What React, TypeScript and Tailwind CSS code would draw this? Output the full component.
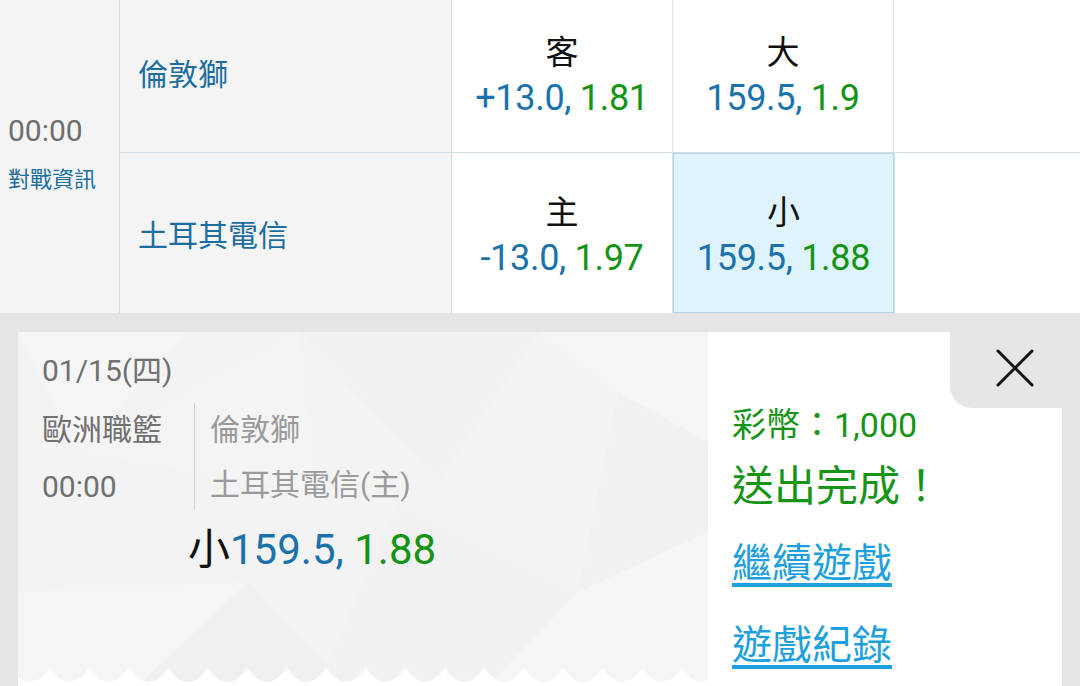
import React from "react";

const Odds = ({ label, a, b }: { label: string; a: string; b: string }) => (
  <div className="flex flex-col items-center">
    <div className="text-[33px] leading-[40px] text-[#111]">{label}</div>
    <div className="text-[36px] leading-[42px] tracking-[-0.3px] mt-[4px]">
      <span className="text-[#1a72ad]">{a}, </span>
      <span className="text-[#149414]">{b}</span>
    </div>
  </div>
);

export default function App() {
  return (
    <div className="w-[1080px] h-[686px] overflow-hidden bg-[#e5e5e5] font-['Roboto','Noto_Sans_CJK_TC',sans-serif]">
      {/* top table */}
      <div className="flex h-[313px] bg-white">
        <div className="w-[120px] shrink-0 bg-[#f4f4f4] border-r border-[#d9d9d9] flex flex-col justify-center pl-[8px] pb-[6px]">
          <div className="text-[30px] leading-[34px] text-[#6e6e6e]">00:00</div>
          <div className="text-[22px] leading-[28px] text-[#1c6ea0] mt-[18px]">對戰資訊</div>
        </div>
        <div className="flex-1 flex flex-col">
          <div className="h-[153px] flex border-b border-[#d3dde6]">
            <div className="w-[332px] bg-[#f4f4f4] border-r border-[#dcdcdc] flex items-center pl-[18px] pb-[4px]">
              <span className="text-[30px] text-[#1c6ea0]">倫敦獅</span>
            </div>
            <div className="w-[221px] border-r border-[#d8e2ea] flex items-center justify-center">
              <Odds label="客" a="+13.0" b="1.81" />
            </div>
            <div className="w-[221px] border-r border-[#d8e2ea] flex items-center justify-center">
              <Odds label="大" a="159.5" b="1.9" />
            </div>
            <div className="flex-1" />
          </div>
          <div className="h-[160px] flex">
            <div className="w-[332px] bg-[#f4f4f4] border-r border-[#dcdcdc] flex items-center pl-[18px] pt-[4px]">
              <span className="text-[30px] text-[#1c6ea0]">土耳其電信</span>
            </div>
            <div className="w-[221px] border-r border-[#d8e2ea] flex items-center justify-center pt-[6px]">
              <Odds label="主" a="-13.0" b="1.97" />
            </div>
            <div className="w-[221px] bg-[#def3fc] border border-[#b8d5e6] flex items-center justify-center pt-[6px]">
              <Odds label="小" a="159.5" b="1.88" />
            </div>
            <div className="flex-1 border-l border-[#d8e2ea]" />
          </div>
        </div>
      </div>

      {/* result card */}
      <div className="pt-[19px] px-[18px]">
        <div className="flex h-[354px]">
          <div className="relative w-[690px] shrink-0 bg-[#f3f3f3] overflow-hidden">
            <svg className="absolute inset-0" width="690" height="354" viewBox="0 0 690 354">
              <polygon points="0,0 170,0 60,120" fill="#f5f5f5" />
              <polygon points="280,0 520,0 420,150" fill="#f1f1f1" />
              <polygon points="520,0 690,0 690,110 600,60" fill="#f5f5f5" />
              <polygon points="0,260 230,250 120,354 0,354" fill="#f5f5f5" />
              <polygon points="230,250 330,354 120,354" fill="#f0f0f0" />
              <polygon points="380,170 560,260 470,354 300,354" fill="#f1f1f1" />
              <polygon points="560,260 690,200 690,354 470,354" fill="#f5f5f5" />
              <polygon points="60,120 280,0 300,160" fill="#f4f4f4" />
              <polygon points="600,60 690,110 690,200 560,260" fill="#f1f1f1" />
            </svg>
            <div className="relative pl-[24px] pt-[21px]">
              <div className="text-[30px] leading-[36px] text-[#707070]">01/15(四)</div>
              <div className="flex mt-[14px] h-[107px]">
                <div className="w-[152px] flex flex-col pt-[9px] gap-[21px]">
                  <div className="text-[30px] leading-[36px] text-[#707070]">歐洲職籃</div>
                  <div className="text-[30px] leading-[36px] text-[#707070]">00:00</div>
                </div>
                <div className="w-px bg-[#d2d2d2]" />
                <div className="flex flex-col pl-[15px] pt-[9px] gap-[19px]">
                  <div className="text-[30px] leading-[36px] text-[#9a9a9a]">倫敦獅</div>
                  <div className="text-[30px] leading-[36px] text-[#9a9a9a]">土耳其電信(主)</div>
                </div>
              </div>
              <div className="ml-[146px] mt-[15px] text-[42px] leading-[50px]">
                <span className="text-[#111]">小</span>
                <span className="text-[#1a72ad]">159.5, </span>
                <span className="text-[#149414]">1.88</span>
              </div>
            </div>
            <svg className="absolute left-0 bottom-0" width="690" height="18">
              <defs>
                <pattern id="zig" x="-7.75" y="0" width="39.5" height="18" patternUnits="userSpaceOnUse">
                  <path d="M0,0 Q19.75,28 39.5,0 L39.5,18 L0,18 Z" fill="#ffffff" />
                </pattern>
              </defs>
              <rect x="0" y="0" width="690" height="18" fill="url(#zig)" />
            </svg>
          </div>
          <div className="relative flex-1 bg-white">
            <div className="absolute top-0 right-0 w-[112px] h-[76px] bg-[#e6e6e6] rounded-bl-[22px] flex items-center justify-center pl-[18px] pb-[4px]">
              <svg width="38" height="38" viewBox="0 0 38 38">
                <path d="M2 2 L36 36 M36 2 L2 36" stroke="#111" strokeWidth="3" strokeLinecap="round" />
              </svg>
            </div>
            <div className="pl-[24px] pt-[73px] flex flex-col items-start">
              <div className="text-[34px] leading-[40px] text-[#169416]">彩幣：1,000</div>
              <div className="text-[42px] leading-[48px] text-[#169416] mt-[18px]">送出完成！</div>
              <div className="text-[40px] leading-[48px] text-[#1e9fe0] underline decoration-[4px] underline-offset-[6px] mt-[29px]">繼續遊戲</div>
              <div className="text-[40px] leading-[48px] text-[#1e9fe0] underline decoration-[4px] underline-offset-[6px] mt-[34px]">遊戲紀錄</div>
            </div>
          </div>
        </div>
      </div>
    </div>
  );
}
